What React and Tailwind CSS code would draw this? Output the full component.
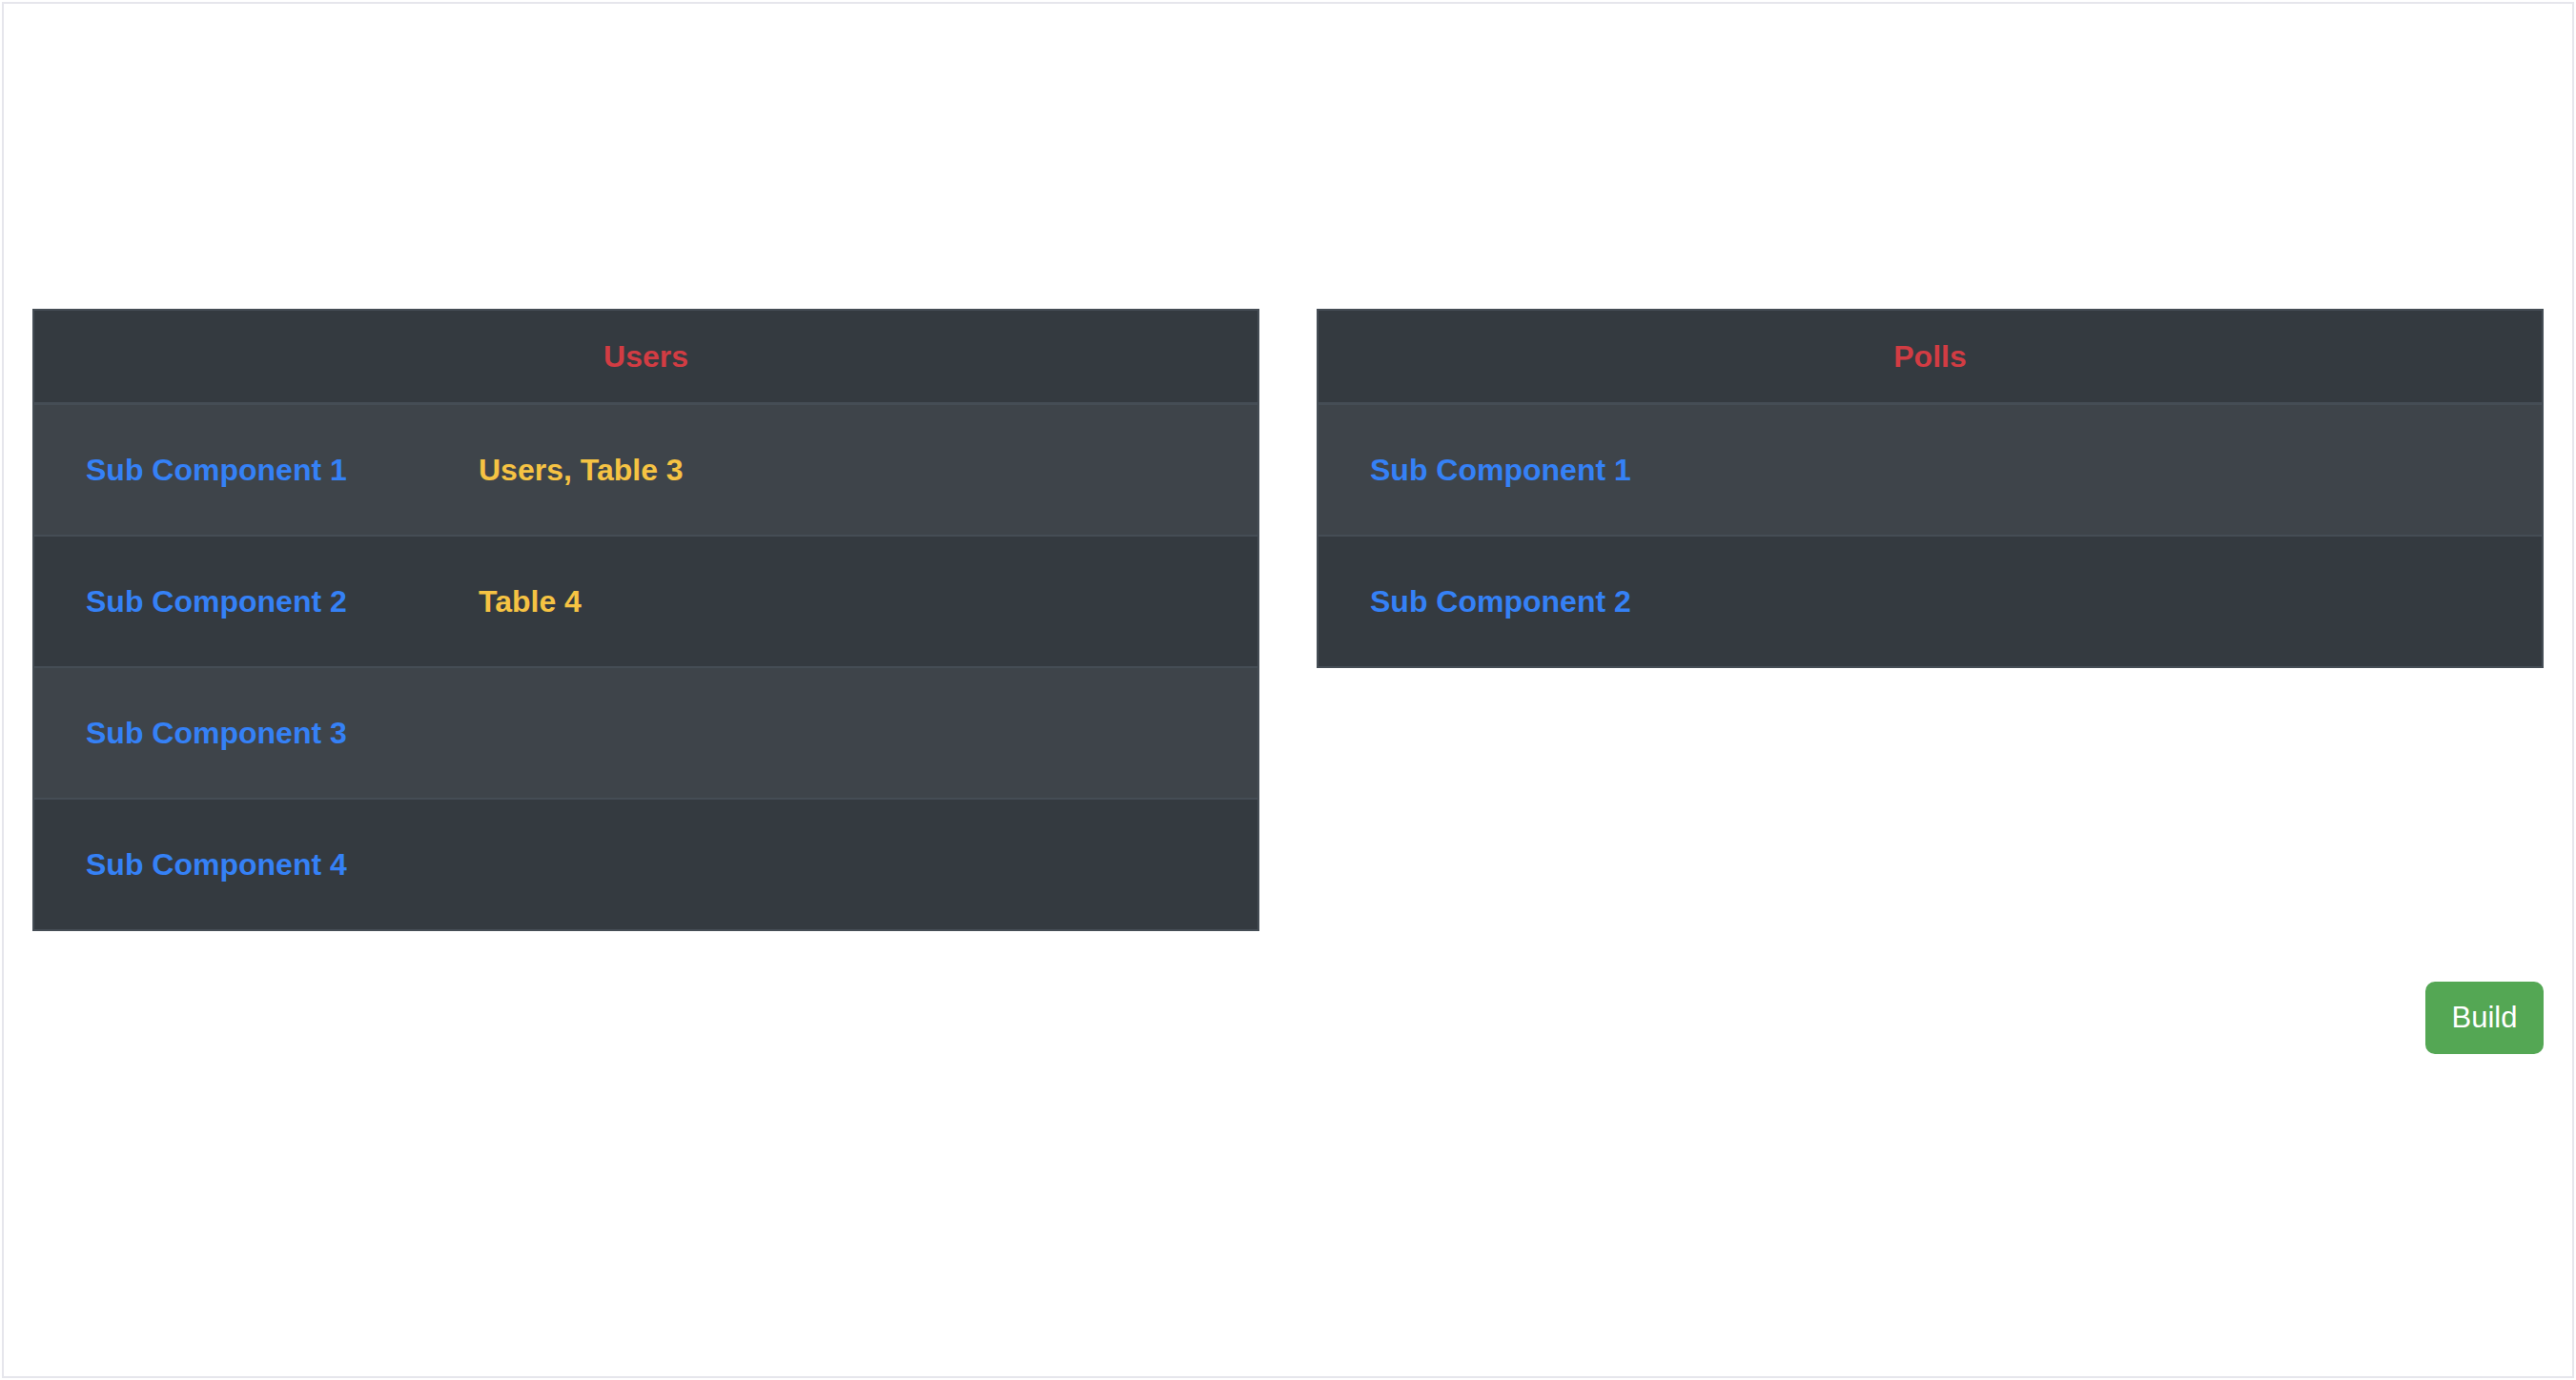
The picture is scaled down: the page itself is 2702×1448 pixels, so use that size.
const tables = [
  {
    title: "Users",
    rows: [
      { name: "Sub Component 1", note: "Users, Table 3" },
      { name: "Sub Component 2", note: "Table 4" },
      { name: "Sub Component 3", note: "" },
      { name: "Sub Component 4", note: "" },
    ],
  },
  {
    title: "Polls",
    rows: [
      { name: "Sub Component 1", note: "" },
      { name: "Sub Component 2", note: "" },
    ],
  },
];

const ComponentTable = ({ title, rows }) => (
  <div className="border-2 border-[#454d55] bg-[#343a40]">
    <div className="h-[99px] flex items-center justify-center border-b-[3px] border-[#454d55]">
      <span className="text-[32px] font-bold text-[#d23c43]">{title}</span>
    </div>
    {rows.map((row, index) => {
      const last = index === rows.length - 1;
      return (
        <div
          key={index}
          className={`flex items-center pl-[54px] ${index % 2 === 0 ? "bg-[#3e444a]" : "bg-[#343a40]"} ${last ? "h-[136px]" : "h-[138px] border-b-2 border-[#454d55]"}`}
        >
          <span className="w-[412px] text-[32px] font-bold text-[#3581f6]">{row.name}</span>
          {row.note && <span className="text-[32px] font-bold text-[#f6c343]">{row.note}</span>}
        </div>
      );
    })}
  </div>
);

const App = () => {
  return (
    <div
      className="m-[2px] h-[1444px] border-2 border-[#e6e6ec] bg-white px-[30px] pt-[320px]"
      style={{ fontFamily: '"Liberation Sans", Arial, sans-serif' }}
    >
      <div className="grid grid-cols-2 gap-[60px] items-start">
        {tables.map((table) => (
          <ComponentTable key={table.title} title={table.title} rows={table.rows} />
        ))}
      </div>
      <div className="flex justify-end mt-[53px]">
        <button className="w-[124px] h-[76px] rounded-[10px] bg-[#54a754] text-white text-[31px] flex items-center justify-center">
          Build
        </button>
      </div>
    </div>
  );
};

export default App;
